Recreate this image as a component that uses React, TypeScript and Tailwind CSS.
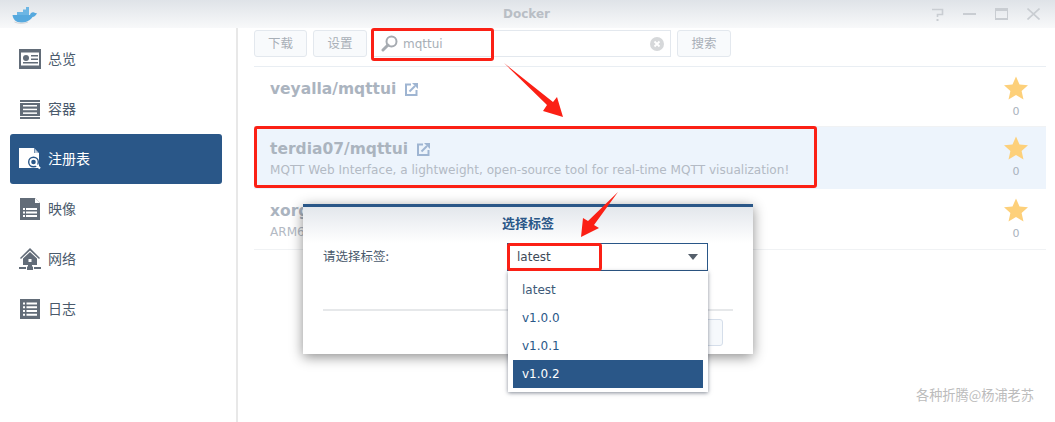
const latin = "font-['DejaVu_Sans','Noto_Sans_CJK_SC',sans-serif]";

function OverviewIcon() {
	return (
		<svg width="22" height="20" viewBox="0 0 22 20" fill="none">
			<rect x="1" y="1" width="20" height="18" stroke="#626c78" strokeWidth="2" />
			<rect x="1" y="1" width="20" height="2.5" fill="#626c78" />
			<rect x="1" y="16.5" width="20" height="2.5" fill="#626c78" />
			<circle cx="7" cy="9" r="3" fill="#626c78" />
			<rect x="12" y="6" width="7" height="1.5" fill="#626c78" />
			<rect x="12" y="9.5" width="7" height="1.5" fill="#626c78" />
			<rect x="4" y="13" width="15" height="1.5" fill="#626c78" />
		</svg>
	);
}

function ContainerIcon() {
	return (
		<svg width="20" height="19" viewBox="0 0 20 19" fill="#626c78">
			<rect x="0" y="0" width="20" height="2" />
			<rect x="0" y="17" width="20" height="2" />
			<rect x="0" y="3" width="20" height="13" />
			<rect x="3" y="5" width="14" height="1.5" fill="#fff" />
			<rect x="3" y="8.7" width="14" height="1.5" fill="#fff" />
			<rect x="3" y="12.4" width="14" height="1.5" fill="#fff" />
		</svg>
	);
}

function RegistryIcon() {
	return (
		<svg width="22" height="22" viewBox="0 0 22 22">
			<path d="M0 0H15L20 5V20H0Z" fill="#fff" />
			<path d="M15 0L20 5H15Z" fill="#2a5788" />
			<path d="M15.500 0.500L19.500 5H15.500Z" fill="#fff" opacity="0.7" />
			<circle cx="14.500" cy="14" r="5.500" fill="#2a5788" />
			<circle cx="14.500" cy="14" r="3.200" fill="none" stroke="#fff" strokeWidth="1.800" />
			<path d="M17 16.500L21 20.500" stroke="#fff" strokeWidth="2.200" />
		</svg>
	);
}

function ImageIcon() {
	return (
		<svg width="20" height="22" viewBox="0 0 20 22">
			<path d="M0 0H15L20 5V22H0Z" fill="#626c78" />
			<path d="M15 0L20 5H15Z" fill="#fff" />
			<path d="M3 10H5V12H3ZM6 10H17V12H6ZM3 13.500H5V15.500H3ZM6 13.500H17V15.500H6ZM3 17H5V19H3ZM6 17H17V19H6Z" fill="#fff" />
		</svg>
	);
}

function NetworkIcon() {
	return (
		<svg width="22" height="22" viewBox="0 0 22 22" fill="#626c78">
			<path d="M11 0L21 10L20 11L11 2.500L2 11L1 10Z" />
			<path d="M11 4L18 10.500V17H13V19H9V17H4V10.500Z" />
			<rect x="9.500" y="11" width="3" height="3" fill="#fff" />
			<rect x="0" y="19" width="7" height="2" />
			<rect x="15" y="19" width="7" height="2" />
			<rect x="8" y="18.500" width="6" height="3.500" />
		</svg>
	);
}

function LogIcon() {
	return (
		<svg width="20" height="20" viewBox="0 0 20 20">
			<rect width="20" height="20" fill="#626c78" />
			<path d="M3 3.500H5V5.500H3ZM6.500 3.500H17V5.500H6.500ZM3 7.300H5V9.300H3ZM6.500 7.300H17V9.300H6.500ZM3 11H5V13H3ZM6.500 11H17V13H6.500ZM3 14.700H5V16.700H3ZM6.500 14.700H17V16.700H6.500Z" fill="#fff" />
		</svg>
	);
}

function DockerLogo() {
	return (
		<svg width="25" height="17" viewBox="0 0 25 17">
			<path d="M0.500 8H18C18.500 6 19.800 5 21.500 5.300C22.500 6 23.700 6.300 25 6.300C24 8.700 22 9.800 20.500 10C18.500 13.500 14 15.500 9 15.500C4 15.500 1 12.500 0.500 8Z" fill="#56a9de" />
			<path d="M2.500 15C6 16.800 12 16.800 16 15" stroke="#cfd2d6" strokeWidth="1" fill="none" />
			<path d="M5 5H11V2.500H14V0H17V8H5Z" fill="#6cb6e4" />
		</svg>
	);
}

function ExternalIcon() {
	return (
		<svg width="13" height="13" viewBox="0 0 13 13" fill="none">
			<path d="M6 1.500H1V12H11.500V7" stroke="#9fb5d2" strokeWidth="2" />
			<path d="M4.500 8.500L10 3" stroke="#9fb5d2" strokeWidth="2" />
			<path d="M7 0H13V6Z" fill="#9fb5d2" />
		</svg>
	);
}

function Star() {
	return (
		<svg width="24" height="24" viewBox="0 0 24 24">
			<path d="M12 0.500L15.500 8.500L24 9.300L17.600 15L19.500 23.500L12 19L4.500 23.500L6.400 15L0 9.300L8.500 8.500Z" fill="#fdd07a" />
		</svg>
	);
}

const navItems = [
	{ label: "总览", icon: <OverviewIcon /> },
	{ label: "容器", icon: <ContainerIcon /> },
	{ label: "注册表", icon: <RegistryIcon />, active: true },
	{ label: "映像", icon: <ImageIcon /> },
	{ label: "网络", icon: <NetworkIcon /> },
	{ label: "日志", icon: <LogIcon /> },
];

function Sidebar() {
	return (
		<aside className="w-[238px] shrink-0 border-r-2 border-[#e8e8e8] pl-[10px] pr-[14px] pt-[6px]">
			{navItems.map((item) => (
				<div
					key={item.label}
					className={`flex h-[50px] items-center rounded-[3px] text-[14px] ${
						item.active ? "bg-[#2a5788] text-white" : "text-[#4a5a6c]"
					}`}
				>
					<span className="flex w-[38px] justify-center pl-[2px]">{item.icon}</span>
					<span className="pb-[2px]">{item.label}</span>
				</div>
			))}
		</aside>
	);
}

function ToolButton({ label, width }: { label: string; width: string }) {
	return (
		<div
			className={`${width} flex h-[27px] items-center justify-center rounded-[3px] border border-[#e3e8ee] bg-[#f8fafc] text-[12.5px] text-[#a8afb7]`}
		>
			{label}
		</div>
	);
}

function Toolbar() {
	return (
		<div className="flex h-[38px] gap-[6px] border-b border-[#e9eef3] pt-[1px]">
			<ToolButton label="下载" width="w-[53px]" />
			<ToolButton label="设置" width="w-[54px]" />
			<div className="flex h-[27px] w-[298px] items-center border border-[#e3e8ee] pl-[7px] pr-[6px]">
				<svg width="17" height="17" viewBox="0 0 17 17" fill="none">
					<circle cx="10.500" cy="6.500" r="5" stroke="#a6abb1" strokeWidth="2" />
					<path d="M7 10L2 15" stroke="#a6abb1" strokeWidth="3" strokeLinecap="round" />
				</svg>
				<span className={`${latin} ml-[5px] flex-1 text-[12px] text-[#a8afb7]`}>mqttui</span>
				<svg width="14" height="14" viewBox="0 0 14 14">
					<circle cx="7" cy="7" r="7" fill="#d6d8da" />
					<path d="M4.500 4.500L9.500 9.500M9.500 4.500L4.500 9.500" stroke="#fff" strokeWidth="1.800" />
				</svg>
			</div>
			<ToolButton label="搜索" width="w-[54px]" />
		</div>
	);
}

function Row({
	name,
	desc,
	selected,
	height,
}: {
	name: string;
	desc?: string;
	selected?: boolean;
	height: string;
}) {
	return (
		<div
			className={`${height} flex justify-between border-b pl-4 pr-[18px] ${
				selected ? "border-transparent bg-[#edf4fc]" : "border-[#f0f2f4]"
			}`}
		>
			<div className={`${latin} pt-[12px]`}>
				<div className="flex h-[20px] items-center gap-[9px] text-[15.5px] font-bold leading-[20px] text-[#abb4bf]">
					{name}
					<ExternalIcon />
				</div>
				{desc && <div className="mt-[1px] text-[12.08px] leading-[20px] text-[#b3bac4]">{desc}</div>}
			</div>
			<div className="flex w-[24px] flex-col items-center pt-[9px]">
				<Star />
				<span className={`${latin} mt-[5px] text-[11px] leading-[14px] text-[#a9b2bd]`}>0</span>
			</div>
		</div>
	);
}

function TagDialog() {
	return (
		<div className="absolute left-[303px] top-[204px] h-[150px] w-[450px] border-t-[3px] border-[#2a5788] bg-white shadow-[0_3px_12px_rgba(0,0,0,0.45)]">
			<div className="h-[36px] bg-gradient-to-b from-[#e3e7ec] to-white pt-[6px] text-center text-[13px] font-bold leading-[20px] text-[#2a5788]">
				选择标签
			</div>
			<div className="flex items-center px-5">
				<span className="w-[184px] pb-[1px] text-[12.5px] text-[#4a5a6c]">请选择标签:</span>
				<div className="flex h-[28px] w-[201px] items-center justify-between border border-[#2a5788] px-[9px]">
					<span className={`${latin} text-[12px] text-[#3d4a58]`}>latest</span>
					<span className="h-0 w-0 border-x-[5px] border-t-[6px] border-x-transparent border-t-[#555f6b]" />
				</div>
			</div>
			<div className="mx-5 mt-[38px] h-[2px] bg-[#e6e8ea]" />
			<div className="mr-[30px] mt-[8px] ml-auto h-[27px] w-[60px] rounded-[3px] border border-[#d5deea] bg-[#f6f9fc]" />
		</div>
	);
}

function TagMenu() {
	const tags = ["latest", "v1.0.0", "v1.0.1", "v1.0.2"];
	return (
		<div className="absolute left-[508px] top-[271px] w-[200px] bg-white px-[5px] pb-[4px] pt-[5px] shadow-[0_1px_4px_rgba(50,60,80,0.6)]">
			{tags.map((tag, i) => (
				<div
					key={tag}
					className={`${latin} flex h-[28px] items-center pl-[9px] text-[12px] ${
						i === 3 ? "bg-[#2a5788] text-white" : i === 0 ? "text-[#3d5a78]" : "text-[#2a5788]"
					}`}
				>
					{tag}
				</div>
			))}
		</div>
	);
}

export default function App() {
	return (
		<div className="relative h-[422px] w-[1055px] overflow-hidden bg-white font-['Noto_Sans_CJK_SC','Liberation_Sans',sans-serif]">
			<header className="relative flex h-[28px] items-center justify-between bg-gradient-to-b from-[#dfe3e8] to-[#f8f9fa] pl-[12px] pr-[15px]">
				<span className="mt-[2px]">
					<DockerLogo />
				</span>
				<span className={`${latin} absolute left-[503px] text-[12px] font-bold text-[#b9bec5]`}>Docker</span>
				<div className="flex items-center gap-[19px]">
					<svg width="13" height="13" viewBox="0 0 13 13" fill="none">
						<path d="M1 1.500H11.500V6.500H6.500V9" stroke="#c9cdd2" strokeWidth="1.600" />
						<rect x="5.500" y="11" width="2" height="2" fill="#c9cdd2" />
					</svg>
					<span className="h-[2px] w-[13px] bg-[#c9cdd2]" />
					<span className="h-[12px] w-[13px] border-x border-b-2 border-t-[3px] border-[#c9cdd2]" />
					<svg width="13" height="12" viewBox="0 0 13 12" fill="none">
						<path d="M0.500 0.500L12.500 11.500M12.500 0.500L0.500 11.500" stroke="#c9cdd2" strokeWidth="1.600" />
					</svg>
				</div>
			</header>
			<div className="flex h-[394px]">
				<Sidebar />
				<main className="flex-1 pl-4 pr-[9px] pt-[1px]">
					<Toolbar />
					<Row name="veyalla/mqttui" height="h-[60px]" />
					<Row
						name="terdia07/mqttui"
						desc="MQTT Web Interface, a lightweight, open-source tool for real-time MQTT visualization!"
						selected
						height="h-[62px]"
					/>
					<Row name="xorg/mqttui" desc="ARM64 build" height="h-[61px]" />
				</main>
			</div>

			<TagDialog />
			<TagMenu />

			{/* red annotations drawn over the screenshot */}
			<div className="absolute left-[371px] top-[28px] h-[33px] w-[123px] rounded-[3px] border-[3px] border-[#fb2015]" />
			<div className="absolute left-[254px] top-[126px] h-[62px] w-[563px] rounded-[3px] border-[3px] border-[#fb2015]" />
			<div className="absolute left-[507px] top-[243px] h-[28px] w-[95px] rounded-[3px] border-[3px] border-[#fb2015]" />
			<svg className="absolute left-0 top-0" width="1055" height="422" viewBox="0 0 1055 422">
				<polygon points="504,63 553,102 557,97 563,117 543,111 547,105" fill="#fb2015" />
				<polygon points="618,192 594,225 599,228 581,237 583,218 588,221" fill="#fb2015" />
			</svg>

			<div className="absolute left-[916px] top-[385px] text-[13.2px] leading-[20px] text-[#bcbcbc]">各种折腾@杨浦老苏</div>
		</div>
	);
}
